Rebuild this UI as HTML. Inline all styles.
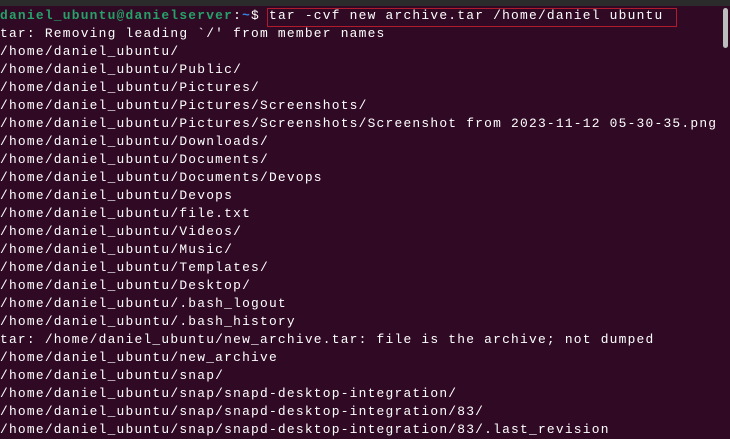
<!DOCTYPE html>
<html><head><meta charset="utf-8"><style>
html,body{margin:0;padding:0;}
body{width:730px;height:436px;overflow:hidden;background:#300a24;position:relative;}
.top{position:absolute;left:0;top:0;width:730px;height:6px;background:#2b2b2b;}
pre{position:absolute;left:0;top:7px;margin:0;font-family:"Liberation Mono",monospace;font-size:12.9px;letter-spacing:1.23px;line-height:18px;color:#ffffff;white-space:pre;}
.g{color:#26a269;font-weight:bold;}
.b{color:#3584e4;font-weight:bold;}
.box{position:absolute;left:267px;top:8px;width:408px;height:17px;border:1.5px solid #b01c2e;}
.sb{position:absolute;left:723px;top:8px;width:5px;height:40px;border-radius:3px;background:#bdbdbd;}
</style></head><body>
<div class="top"></div>
<pre><span class="g">daniel_ubuntu@danielserver</span>:<span class="b">~</span>$ tar -cvf new archive.tar /home/daniel ubuntu
tar: Removing leading `/' from member names
/home/daniel_ubuntu/
/home/daniel_ubuntu/Public/
/home/daniel_ubuntu/Pictures/
/home/daniel_ubuntu/Pictures/Screenshots/
/home/daniel_ubuntu/Pictures/Screenshots/Screenshot from 2023-11-12 05-30-35.png
/home/daniel_ubuntu/Downloads/
/home/daniel_ubuntu/Documents/
/home/daniel_ubuntu/Documents/Devops
/home/daniel_ubuntu/Devops
/home/daniel_ubuntu/file.txt
/home/daniel_ubuntu/Videos/
/home/daniel_ubuntu/Music/
/home/daniel_ubuntu/Templates/
/home/daniel_ubuntu/Desktop/
/home/daniel_ubuntu/.bash_logout
/home/daniel_ubuntu/.bash_history
tar: /home/daniel_ubuntu/new_archive.tar: file is the archive; not dumped
/home/daniel_ubuntu/new_archive
/home/daniel_ubuntu/snap/
/home/daniel_ubuntu/snap/snapd-desktop-integration/
/home/daniel_ubuntu/snap/snapd-desktop-integration/83/
/home/daniel_ubuntu/snap/snapd-desktop-integration/83/.last_revision</pre>
<div class="box"></div>
<div class="sb"></div>
</body></html>
